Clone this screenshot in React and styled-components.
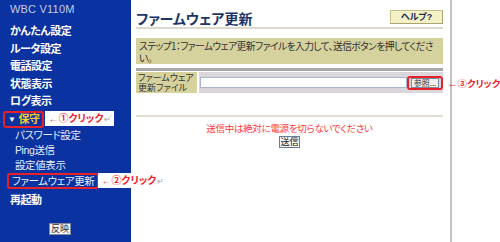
import React from "react";
import styled, { createGlobalStyle } from "styled-components";

const GlobalStyle = createGlobalStyle`
  html, body {
    margin: 0;
    padding: 0;
    background: #ffffff;
  }
  body {
    font-family: "Liberation Sans", "Noto Sans CJK JP", sans-serif;
    font-feature-settings: "palt";
  }
`;

const Page = styled.div`
  display: flex;
  flex-direction: row;
  width: 500px;
  height: 242px;
  overflow: hidden;
  position: relative;
`;

const Sidebar = styled.div`
  width: 131px;
  height: 242px;
  background-color: #0a32a0;
  padding-left: 10px;
  box-sizing: border-box;
  display: flex;
  flex-direction: column;
  flex-shrink: 0;
`;

const Brand = styled.div`
  height: 23px;
  line-height: 18px;
  font-size: 11px;
  color: #c4cce6;
  letter-spacing: 0.2px;
`;

const NavItem = styled.div`
  height: 17.5px;
  line-height: 17.5px;
  font-size: 11px;
  font-weight: bold;
  letter-spacing: -0.5px;
  color: #ffffff;
  margin-top: ${(p) => p.$top || 0}px;
`;

const SubItem = styled.div`
  height: 15px;
  line-height: 15px;
  font-size: 10.5px;
  letter-spacing: -0.4px;
  color: #e8ecf8;
  padding-left: 5px;
`;

const Marked = styled.span`
  position: relative;
  display: inline-block;
  border: 2px solid ${(p) => (p.$on ? "#e8202a" : "transparent")};
  border-radius: 3px;
  padding: 0 ${(p) => p.$pad || 0}px;
  margin-left: ${(p) => p.$shift || 0}px;
  line-height: ${(p) => p.$lh || 12}px;
  box-sizing: border-box;
`;

const Callout = styled.span`
  position: absolute;
  left: calc(100% + ${(p) => p.$gap || 2}px);
  top: ${(p) => p.$top || -2}px;
  background: ${(p) => (p.$plain ? "transparent" : "#ffffff")};
  color: #f0202a;
  font-size: ${(p) => (p.$plain ? 9.5 : 10)}px;
  font-weight: bold;
  letter-spacing: 0;
  line-height: 15px;
  height: 15px;
  padding: 0 ${(p) => (p.$plain ? 0 : 3)}px;
  white-space: nowrap;
  z-index: 2;
`;

const Ret = styled.span`
  color: #9a9aa8;
  font-size: 8px;
  font-weight: normal;
  margin-left: 1px;
`;

const Hoshu = styled.span`
  color: #f2cc30;
  font-size: 11px;
  font-weight: bold;
`;

const Triangle = styled.span`
  color: #ffffff;
  font-size: 8px;
  margin-right: 3px;
  vertical-align: 1px;
`;

const Apply = styled.div`
  margin-top: 13px;
  margin-left: 39px;
  width: 20px;
  height: 10px;
  background: #f4f4f4;
  border: 1px solid #8a8a9a;
  font-size: 9px;
  line-height: 10px;
  color: #333;
  text-align: center;
`;

const Main = styled.div`
  width: 307px;
  height: 242px;
  padding: 0 7px 0 5px;
  border-right: 2px solid #c4c4c4;
  flex-shrink: 0;
  display: flex;
  flex-direction: column;
`;

const Header = styled.div`
  display: flex;
  justify-content: space-between;
  align-items: center;
  height: 27px;
  border-bottom: 2px solid #dcd8cc;
`;

const Title = styled.h1`
  margin: 0;
  padding-top: 8px;
  font-size: 14px;
  font-weight: bold;
  color: #1c3468;
  font-family: "Noto Sans CJK JP", sans-serif;
`;

const HelpButton = styled.div`
  width: 51px;
  height: 12px;
  margin-top: 6px;
  background: #f4f2c4;
  border: 1px solid #c6c28e;
  border-bottom-color: #a8a470;
  border-right-color: #a8a470;
  color: #1c2a55;
  font-size: 9px;
  font-weight: bold;
  line-height: 12px;
  text-align: center;
`;

const StepBox = styled.div`
  margin-top: 9px;
  height: 26px;
  padding: 2px 3px 0;
  box-sizing: border-box;
  background: #d6d29e;
  color: #333333;
  font-size: 9.8px;
  letter-spacing: -0.6px;
  line-height: 12px;
  font-family: "Noto Sans CJK JP", sans-serif;
`;

const FileTable = styled.div`
  margin-top: 4px;
  border-top: 3px solid #a8a8a8;
  display: flex;
  gap: 2px;
  height: 21px;
  padding-top: 1px;
`;

const LabelCell = styled.div`
  width: 61px;
  background: #d6d29e;
  color: #333;
  font-size: 9px;
  line-height: 10px;
  padding: 1px 0 0 2px;
  box-sizing: border-box;
  white-space: nowrap;
  overflow: hidden;
  font-family: "Noto Sans CJK JP", sans-serif;
`;

const InputCell = styled.div`
  flex: 1;
  background: #dad6dc;
  display: flex;
  align-items: center;
  padding-left: 1px;
`;

const FileInput = styled.div`
  width: 205px;
  height: 9px;
  background: #ffffff;
  border: 1px solid #a8b4cc;
`;

const SmallButton = styled.div`
  width: ${(p) => p.$w || 26}px;
  height: 8px;
  background: #f0f0f0;
  border: 1px solid #7a8aa8;
  font-size: 8px;
  line-height: 8px;
  color: #333;
  text-align: center;
  font-family: "Noto Sans CJK JP", sans-serif;
`;

const Divider = styled.div`
  margin-top: 22px;
  border-top: 2px solid #e2ded2;
`;

const Warning = styled.div`
  margin-top: 5px;
  text-align: center;
  color: #ff3838;
  font-size: 9.5px;
  letter-spacing: -0.3px;
  line-height: 13px;
  font-family: "Noto Sans CJK JP", sans-serif;
`;

const SendRow = styled.div`
  display: flex;
  justify-content: center;
  margin-top: 1px;
`;

const SendButton = styled.div`
  width: 19px;
  height: 10px;
  background: #f4f4f4;
  border: 1px solid #6a7a98;
  font-size: 9px;
  line-height: 10px;
  color: #222;
  text-align: center;
  font-family: "Noto Sans CJK JP", sans-serif;
`;

export default function App() {
  return (
    <>
      <GlobalStyle />
      <Page>
        <Sidebar>
          <Brand>WBC V110M</Brand>
          <NavItem>かんたん設定</NavItem>
          <NavItem>ルータ設定</NavItem>
          <NavItem>電話設定</NavItem>
          <NavItem>状態表示</NavItem>
          <NavItem>ログ表示</NavItem>
          <NavItem>
            <Marked $on $shift={-7} $pad={3} $lh={12}>
              <Triangle>▼</Triangle>
              <Hoshu>保守</Hoshu>
              <Callout $gap={3} $top={-2}>
                ←①クリック<Ret>↵</Ret>
              </Callout>
            </Marked>
          </NavItem>
          <SubItem>パスワード設定</SubItem>
          <SubItem>Ping送信</SubItem>
          <SubItem>設定値表示</SubItem>
          <SubItem>
            <Marked $on $shift={-8} $pad={3} $lh={12}>
              ファームウェア更新
              <Callout $gap={1} $top={-2}>
                ←②クリック<Ret>↵</Ret>
              </Callout>
            </Marked>
          </SubItem>
          <NavItem $top={4}>再起動</NavItem>
          <Apply>反映</Apply>
        </Sidebar>
        <Main>
          <Header>
            <Title>ファームウェア更新</Title>
            <HelpButton>ヘルプ?</HelpButton>
          </Header>
          <StepBox>
            ステップ1：ファームウェア更新ファイルを入力して、送信ボタンを押してください。
          </StepBox>
          <FileTable>
            <LabelCell>
              ファームウェア
              <br />
              更新ファイル
            </LabelCell>
            <InputCell>
              <FileInput />
              <Marked $on $shift={0} $pad={2} $lh={11}>
                <SmallButton $w={26}>参照...</SmallButton>
                <Callout $plain $gap={7} $top={-2}>
                  ←③クリック
                </Callout>
              </Marked>
            </InputCell>
          </FileTable>
          <Divider />
          <Warning>送信中は絶対に電源を切らないでください</Warning>
          <SendRow>
            <SendButton>送信</SendButton>
          </SendRow>
        </Main>
      </Page>
    </>
  );
}
